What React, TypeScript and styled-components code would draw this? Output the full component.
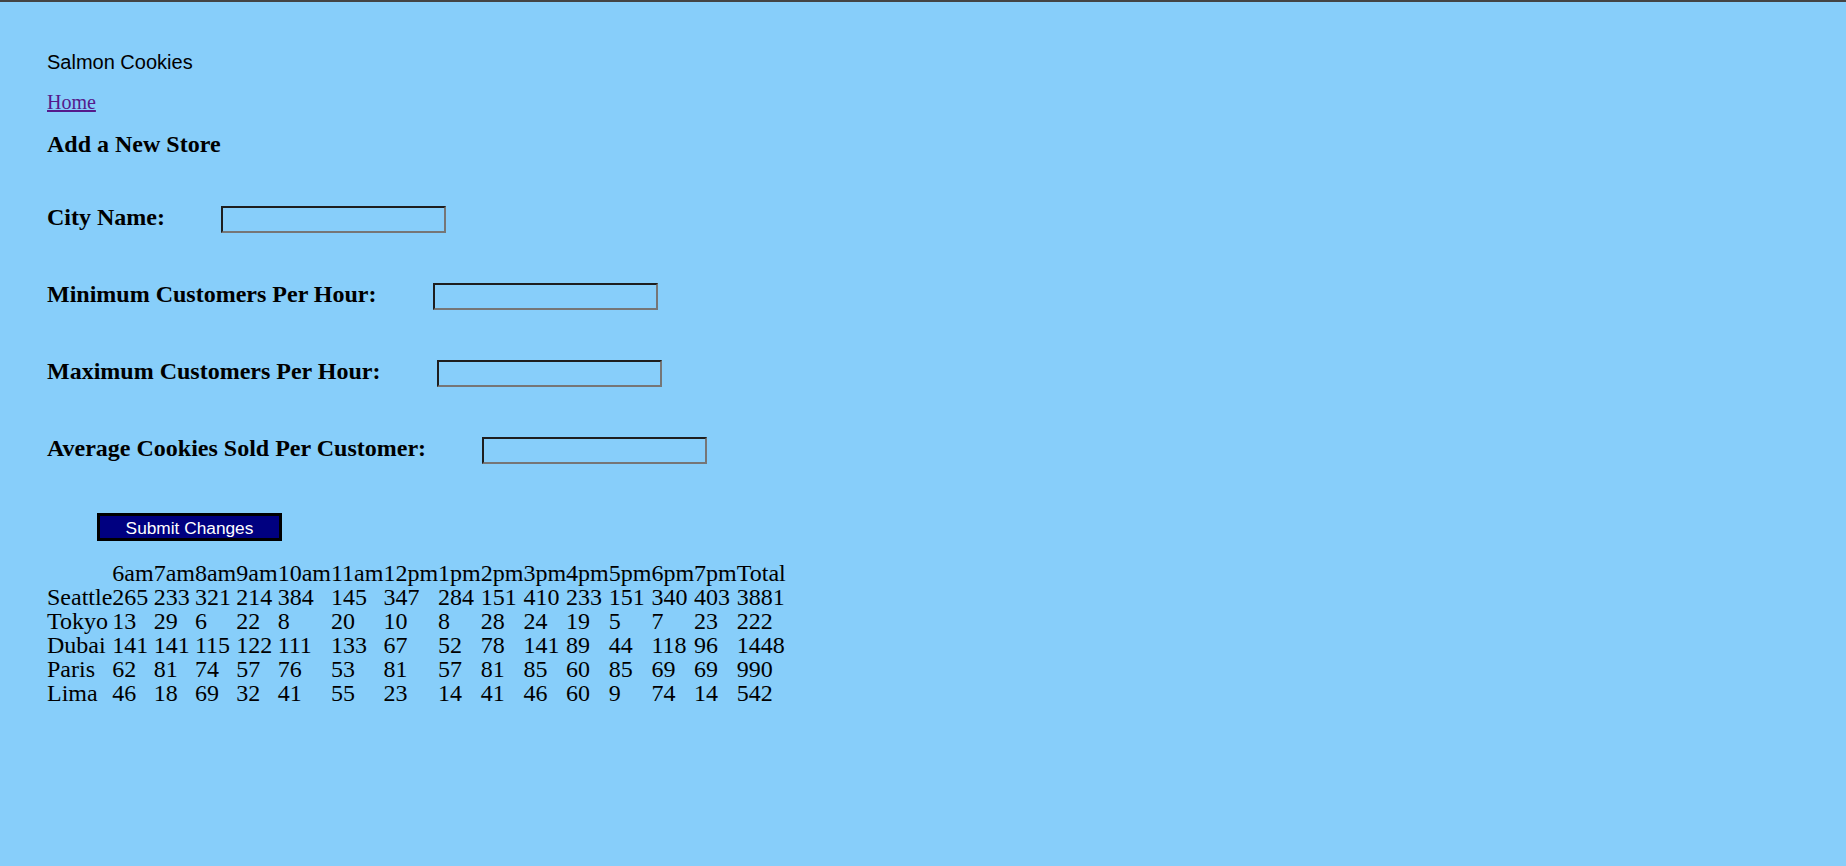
import React from "react";
import styled, { createGlobalStyle } from "styled-components";

const GlobalStyle = createGlobalStyle`
  html, body {
    margin: 0;
    padding: 0;
    background: #87cefa;
  }
  body {
    font-family: "Liberation Serif", "Times New Roman", serif;
    color: #000;
  }
`;

const Page = styled.div`
  border-top: 2px solid #444;
  padding: 49px 0 40px 47px;
  min-height: 700px;
`;

const SiteTitle = styled.header`
  font-family: "Liberation Sans", Arial, sans-serif;
  font-size: 20px;
  line-height: 23px;
  margin: 0;
`;

const NavLink = styled.a`
  display: inline-block;
  margin-top: 17px;
  font-size: 20px;
  line-height: 23px;
  color: #551a8b;
  text-decoration: underline;
`;

const Nav = styled.nav`
  display: block;
`;

const Heading = styled.h2`
  margin: 16px 0 0;
  font-size: 24px;
  line-height: 28px;
  font-weight: bold;
`;

const Form = styled.form`
  display: flex;
  flex-direction: column;
  align-items: flex-start;
  margin-top: 45px;
`;

const Fields = styled.div`
  display: flex;
  flex-direction: column;
  gap: 47px;
`;

const Row = styled.div`
  display: flex;
  align-items: flex-start;
`;

const Label = styled.label`
  font-size: 24px;
  line-height: 28px;
  font-weight: bold;
  margin-right: 56px;
`;

const TextInput = styled.input`
  box-sizing: border-box;
  width: 225px;
  height: 27px;
  margin-top: 3px;
  padding: 0 4px;
  background: transparent;
  border-style: solid;
  border-width: 2px;
  border-color: #1e1e1e #767676 #767676 #1e1e1e;
  font-family: "Liberation Sans", Arial, sans-serif;
  font-size: 14px;
  outline: none;
`;

const SubmitButton = styled.button`
  box-sizing: border-box;
  width: 185px;
  height: 28px;
  margin: 49px 0 0 50px;
  padding: 1px 0 0;
  background: #000080;
  color: #fff;
  border: 3px solid #000;
  font-family: "Liberation Sans", Arial, sans-serif;
  font-size: 17.3px;
  line-height: 20px;
  cursor: pointer;
`;

const SalesTable = styled.table`
  margin-top: 20px;
  border-collapse: collapse;
  border-spacing: 0;
  font-size: 24px;
  line-height: 24px;
`;

const Cell = styled.td`
  padding: 0;
  text-align: left;
  font-weight: normal;
  white-space: nowrap;
`;

const HeadCell = styled.th`
  padding: 0;
  text-align: left;
  font-weight: normal;
  white-space: nowrap;
`;

const hours = [
  "6am", "7am", "8am", "9am", "10am", "11am", "12pm",
  "1pm", "2pm", "3pm", "4pm", "5pm", "6pm", "7pm",
];

const stores: { name: string; sales: number[]; total: number }[] = [
  { name: "Seattle", sales: [265, 233, 321, 214, 384, 145, 347, 284, 151, 410, 233, 151, 340, 403], total: 3881 },
  { name: "Tokyo", sales: [13, 29, 6, 22, 8, 20, 10, 8, 28, 24, 19, 5, 7, 23], total: 222 },
  { name: "Dubai", sales: [141, 141, 115, 122, 111, 133, 67, 52, 78, 141, 89, 44, 118, 96], total: 1448 },
  { name: "Paris", sales: [62, 81, 74, 57, 76, 53, 81, 57, 81, 85, 60, 85, 69, 69], total: 990 },
  { name: "Lima", sales: [46, 18, 69, 32, 41, 55, 23, 14, 41, 46, 60, 9, 74, 14], total: 542 },
];

const fields = [
  { id: "city", label: "City Name:" },
  { id: "min", label: "Minimum Customers Per Hour:" },
  { id: "max", label: "Maximum Customers Per Hour:" },
  { id: "avg", label: "Average Cookies Sold Per Customer:" },
];

export default function App() {
  return (
    <>
      <GlobalStyle />
      <Page>
        <SiteTitle>Salmon Cookies</SiteTitle>
        <Nav>
          <NavLink href="#">Home</NavLink>
        </Nav>
        <Heading>Add a New Store</Heading>
        <Form onSubmit={(e) => e.preventDefault()}>
          <Fields>
            {fields.map((f) => (
              <Row key={f.id}>
                <Label htmlFor={f.id}>{f.label}</Label>
                <TextInput id={f.id} type="text" />
              </Row>
            ))}
          </Fields>
          <SubmitButton type="submit">Submit Changes</SubmitButton>
        </Form>
        <SalesTable>
          <thead>
            <tr>
              <HeadCell></HeadCell>
              {hours.map((h) => (
                <HeadCell key={h}>{h}</HeadCell>
              ))}
              <HeadCell>Total</HeadCell>
            </tr>
          </thead>
          <tbody>
            {stores.map((s) => (
              <tr key={s.name}>
                <Cell>{s.name}</Cell>
                {s.sales.map((v, i) => (
                  <Cell key={i}>{v}</Cell>
                ))}
                <Cell>{s.total}</Cell>
              </tr>
            ))}
          </tbody>
        </SalesTable>
      </Page>
    </>
  );
}
